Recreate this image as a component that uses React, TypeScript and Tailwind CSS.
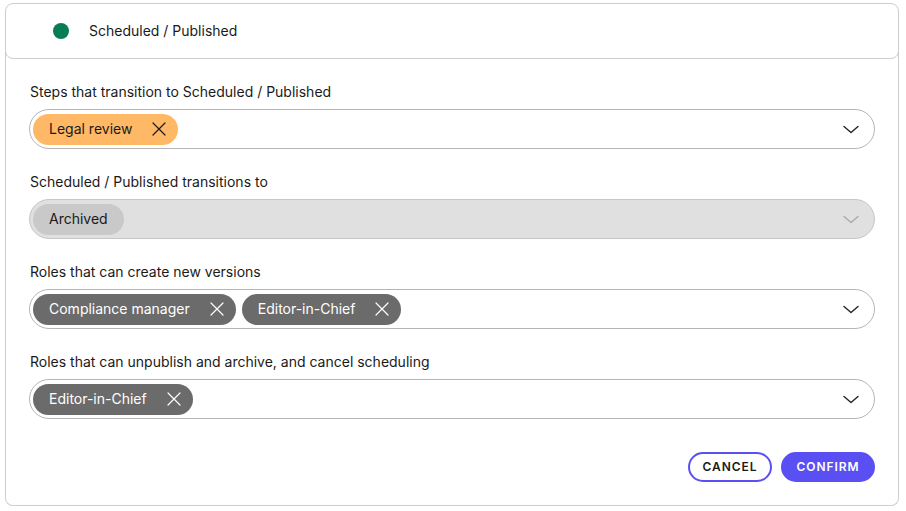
import React from "react";

type Tone = "orange" | "dark" | "muted";

const chipTone: Record<Tone, string> = {
  orange: "bg-[#ffb866] text-[#1a1a1a]",
  dark: "bg-[#6b6b6b] text-white",
  muted: "bg-[#c9c9c9] text-[#1a1a1a]",
};

function XIcon() {
  return (
    <svg width="14" height="14" viewBox="0 0 14 14" fill="none">
      <path d="M1 1L13 13M13 1L1 13" stroke="currentColor" strokeWidth="1.2" strokeLinecap="round" />
    </svg>
  );
}

function Chevron({ muted }: { muted?: boolean }) {
  return (
    <svg width="16" height="9" viewBox="0 0 16 9" fill="none" className={muted ? "text-[#a9a9a9]" : "text-[#222]"}>
      <path d="M1 1.5L8 7.5L15 1.5" stroke="currentColor" strokeWidth="1.4" strokeLinecap="round" strokeLinejoin="round" />
    </svg>
  );
}

function Chip({ label, tone, removable = true }: { label: string; tone: Tone; removable?: boolean }) {
  return (
    <span
      className={`flex h-[31px] items-center rounded-full pl-4 text-sm ${removable ? "pr-[12px]" : "pr-4"} ${chipTone[tone]}`}
    >
      {label}
      {removable && (
        <span className="ml-5 flex items-center">
          <XIcon />
        </span>
      )}
    </span>
  );
}

function Field({
  label,
  chips,
  tone,
  disabled,
}: {
  label: string;
  chips: string[];
  tone: Tone;
  disabled?: boolean;
}) {
  return (
    <div className="flex flex-col gap-[7px]">
      <label className="pl-px text-sm leading-5 text-[#1a1a1a]">{label}</label>
      <div
        className={`flex h-10 items-center justify-between rounded-full border pl-[3px] pr-[15px] ${
          disabled ? "border-[#c6c6c6] bg-[#e0e0e0]" : "border-[#b5b5b5] bg-white"
        }`}
      >
        <div className="flex items-center gap-[6px]">
          {chips.map((c) => (
            <Chip key={c} label={c} tone={tone} removable={!disabled} />
          ))}
        </div>
        <Chevron muted={disabled} />
      </div>
    </div>
  );
}

export default function App() {
  return (
    <div className="min-h-[511px] bg-white pl-[5px] pt-[3px] font-['Inter','Noto_Sans',sans-serif]">
      <div className="w-[894px]">
        <div className="relative z-10 flex h-14 items-center rounded-lg border border-[#cdcdcd] bg-white pl-[47px]">
          <span className="h-4 w-4 rounded-full bg-[#077d55]" />
          <span className="ml-5 text-sm text-[#1a1a1a]">Scheduled / Published</span>
        </div>
        <div className="-mt-3 flex flex-col rounded-b-lg border border-t-0 border-[#cdcdcd] px-[23px] pb-[23px] pt-[35px]">
          <div className="flex flex-col gap-[23px]">
            <Field
              label="Steps that transition to Scheduled / Published"
              chips={["Legal review"]}
              tone="orange"
            />
            <Field
              label="Scheduled / Published transitions to"
              chips={["Archived"]}
              tone="muted"
              disabled
            />
            <Field
              label="Roles that can create new versions"
              chips={["Compliance manager", "Editor-in-Chief"]}
              tone="dark"
            />
            <Field
              label="Roles that can unpublish and archive, and cancel scheduling"
              chips={["Editor-in-Chief"]}
              tone="dark"
            />
          </div>
          <div className="mt-[33px] flex justify-end gap-[9px]">
            <button className="h-[30px] w-[84px] rounded-full border-2 border-[#5a4ff3] bg-white text-xs font-semibold tracking-[0.08em] text-[#1a1a1a]">
              CANCEL
            </button>
            <button className="h-[30px] w-[94px] rounded-full bg-[#5a4ff3] text-xs font-semibold tracking-[0.08em] text-white">
              CONFIRM
            </button>
          </div>
        </div>
      </div>
    </div>
  );
}
